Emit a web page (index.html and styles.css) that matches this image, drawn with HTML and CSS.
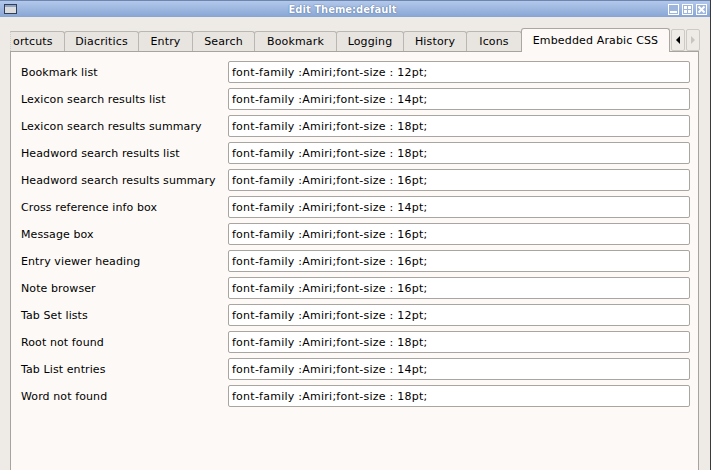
FILE: index.html
```html
<!DOCTYPE html>
<html>
<head>
<meta charset="utf-8">
<link rel="stylesheet" href="styles.css">
</head>
<body>
<div class="window">
  <div class="titlebar">
    <svg class="winicon" width="13" height="10" viewBox="0 0 13 10"><rect x="0.5" y="0.5" width="12" height="9" fill="#dcdcdc" stroke="#2f3f5a"/><rect x="1" y="1" width="11" height="2" fill="#8ea3c4"/></svg>
    <div class="title">Edit Theme:default</div>
    <div class="wbtns">
      <svg width="11" height="11" viewBox="0 0 11 11"><rect x="0.5" y="0.5" width="10" height="10" fill="#9db5dc" stroke="#fff"/><rect x="2" y="7" width="7" height="2" fill="#fff"/></svg>
      <svg width="11" height="11" viewBox="0 0 11 11"><rect x="0.5" y="0.5" width="10" height="10" fill="#9db5dc" stroke="#fff"/><rect x="2" y="2" width="3" height="3" fill="#fff"/><rect x="6" y="2" width="3" height="3" fill="#fff"/><rect x="2" y="6" width="3" height="3" fill="#fff"/><rect x="6" y="6" width="3" height="3" fill="#fff"/></svg>
      <svg width="11" height="11" viewBox="0 0 11 11"><rect x="0.5" y="0.5" width="10" height="10" fill="#9db5dc" stroke="#fff"/><path d="M2.5 2.5 L8.5 8.5 M8.5 2.5 L2.5 8.5" stroke="#fff" stroke-width="2"/></svg>
    </div>
  </div>
  <div class="content">
    <div class="tabrow">
      <div class="tabs">
        <div class="tab first">ortcuts</div>
        <div class="tab t-diac">Diacritics</div>
        <div class="tab t-entry">Entry</div>
        <div class="tab t-search">Search</div>
        <div class="tab t-book">Bookmark</div>
        <div class="tab t-log">Logging</div>
        <div class="tab t-hist">History</div>
        <div class="tab t-icons">Icons</div>
        <div class="tab active">Embedded Arabic CSS</div>
      </div>
      <div class="arrows">
        <div class="arrow"><svg width="6" height="8" viewBox="0 0 6 8"><path d="M5 0 L1 4 L5 8 Z" fill="#000"/></svg></div>
        <div class="arrow"><svg width="6" height="8" viewBox="0 0 6 8"><path d="M1 0 L5 4 L1 8 Z" fill="#c8c5c1"/></svg></div>
      </div>
    </div>
    <div class="pane">
      <div class="form">
        <label>Bookmark list</label><div class="field">font-family :Amiri;font-size : 12pt;</div>
        <label>Lexicon search results list</label><div class="field">font-family :Amiri;font-size : 14pt;</div>
        <label>Lexicon search results summary</label><div class="field">font-family :Amiri;font-size : 18pt;</div>
        <label>Headword search results list</label><div class="field">font-family :Amiri;font-size : 18pt;</div>
        <label>Headword search results summary</label><div class="field">font-family :Amiri;font-size : 16pt;</div>
        <label>Cross reference info box</label><div class="field">font-family :Amiri;font-size : 14pt;</div>
        <label>Message box</label><div class="field">font-family :Amiri;font-size : 16pt;</div>
        <label>Entry viewer heading</label><div class="field">font-family :Amiri;font-size : 16pt;</div>
        <label>Note browser</label><div class="field">font-family :Amiri;font-size : 16pt;</div>
        <label>Tab Set lists</label><div class="field">font-family :Amiri;font-size : 12pt;</div>
        <label>Root not found</label><div class="field">font-family :Amiri;font-size : 18pt;</div>
        <label>Tab List entries</label><div class="field">font-family :Amiri;font-size : 14pt;</div>
        <label>Word not found</label><div class="field">font-family :Amiri;font-size : 18pt;</div>
      </div>
    </div>
  </div>
</div>
</body>
</html>
```
FILE: styles.css
```css
html, body {
  margin: 0;
  padding: 0;
  width: 711px;
  height: 470px;
  overflow: hidden;
  font-family: "DejaVu Sans", sans-serif;
  font-size: 11px;
  color: #000;
}
.window {
  width: 710px;
  height: 470px;
  border-right: 1px solid #3a3a3a;
  background: #eeebe7;
  display: flex;
  flex-direction: column;
}
.titlebar {
  height: 17px;
  flex: none;
  background: linear-gradient(#b3c8ea, #87a5d4);
  border-top: 1px solid #6d86ad;
  box-sizing: border-box;
  display: flex;
  align-items: center;
  padding: 0 3px 0 4px;
}
.winicon { flex: none; }
.title {
  flex: 1;
  text-align: center;
  color: #fff;
  font-weight: bold;
  font-size: 10px;
  text-shadow: 0 0 1px #4d6a9c, 0 0 1px #4d6a9c;
}
.wbtns {
  display: flex;
  gap: 3px;
}
.wbtns svg { display: block; }
.content {
  flex: 1;
  display: flex;
  flex-direction: column;
  padding: 11px 0 0 10px;
  min-height: 0;
}
.tabrow {
  display: flex;
  height: 23px;
  align-items: flex-end;
  flex: none;
}
.tabs {
  display: flex;
  align-items: flex-end;
  width: 660px;
}
.tab {
  height: 20px;
  box-sizing: border-box;
  padding: 0;
  border: 1px solid #bab6b1;
  border-bottom: none;
  border-radius: 3px 3px 0 0;
  background: #e8e5e1;
  display: flex;
  align-items: center;
  justify-content: center;
  white-space: nowrap;
  margin-right: -1px;
  letter-spacing: 0.15px;
  flex: none;
}
.tab.first {
  width: 55px;
  justify-content: flex-start;
  padding-left: 2px;
  border-left: 1px dotted #cfccc8;
  border-radius: 0 3px 0 0;
}
.t-diac { width: 75px; }
.t-entry { width: 55px; }
.t-search { width: 63px; }
.t-book { width: 83px; }
.t-log { width: 68px; }
.t-hist { width: 64px; }
.t-icons { width: 56px; }
.tab.active {
  width: 149px;
  height: 24px;
  background: #fcf9f6;
  position: relative;
  z-index: 1;
  margin-bottom: -1px;
  border-color: #aaa6a1;
}
.arrows {
  display: flex;
  margin-left: 1px;
  gap: 1px;
  align-self: flex-end;
}
.arrow {
  width: 14px;
  height: 22px;
  box-sizing: border-box;
  border: 1px solid #cdc9c5;
  border-radius: 2px;
  background: #eeebe7;
  display: flex;
  align-items: center;
  justify-content: center;
}
.arrow svg { display: block; }
.pane {
  flex: 1;
  width: 689px;
  box-sizing: border-box;
  border: 1px solid #a7a39e;
  border-bottom: none;
  background: #fcf9f6;
  padding: 9px 0 0 10px;
}
.form {
  display: grid;
  grid-template-columns: 207px 462px;
  grid-auto-rows: 22px;
  row-gap: 5px;
}
.form label {
  display: flex;
  align-items: center;
  white-space: nowrap;
  letter-spacing: 0.1px;
}
.field {
  background: #fff;
  border: 1px solid #a9a6a2;
  border-radius: 2px;
  box-sizing: border-box;
  display: flex;
  align-items: center;
  padding-left: 3px;
  white-space: nowrap;
  letter-spacing: 0.25px;
}
```
